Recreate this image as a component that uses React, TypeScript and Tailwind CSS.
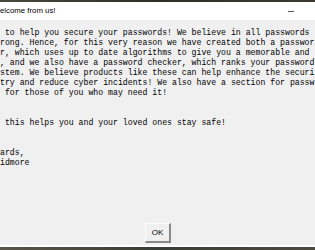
import React from "react";

const lines = [
  " to help you secure your passwords! We believe in all passwords",
  "rong. Hence, for this very reason we have created both a passwor",
  "r, which uses up to date algorithms to give you a memorable and",
  ", and we also have a password checker, which ranks your password",
  "stem. We believe products like these can help enhance the securi",
  "try and reduce cyber incidents! We also have a section for passw",
  " for those of you who may need it!",
  "",
  "",
  " this helps you and your loved ones stay safe!",
  "",
  "",
  "ards,",
  "idmore",
];

export default function App() {
  return (
    <div className="w-[315px] h-[250px] overflow-hidden flex flex-col bg-[#33352c]">
      <div className="h-[2px] shrink-0 bg-gradient-to-r from-[#4a4a3c] via-[#2c3026] to-[#3e3a30]" />
      <div className="h-[18px] shrink-0 bg-white flex items-center justify-between">
        <span
          className="text-[7.8px] leading-none text-black"
          style={{ fontFamily: '"Liberation Sans", Arial, sans-serif' }}
        >
          elcome from us!
        </span>
        <div className="w-[6px] h-[1px] bg-[#555] mr-[21px]" />
      </div>
      <div className="flex-1 bg-[#f0f0f0] flex flex-col pt-[8px] pb-[2px]">
        <div
          className="text-[8.2px] leading-[10px] text-black whitespace-pre overflow-hidden"
          style={{ fontFamily: '"Liberation Mono", "Courier New", monospace' }}
        >
          {lines.map((l, i) => (
            <div key={i} className="h-[10px]">
              {l}
            </div>
          ))}
        </div>
        <div className="mt-auto flex justify-center pl-[1px]">
          <div
            className="w-[26px] h-[20px] flex items-center justify-center bg-[#f0f0f0] border-t border-l border-t-[#fdfdfd] border-l-[#fdfdfd] border-r-2 border-b-2 border-r-[#8a8a8a] border-b-[#8a8a8a] text-[8px] text-black"
            style={{ fontFamily: '"Liberation Sans", Arial, sans-serif' }}
          >
            OK
          </div>
        </div>
      </div>
      <div className="h-[2px] shrink-0 bg-white" />
      <div className="h-[3px] shrink-0 bg-gradient-to-r from-[#5a5548] via-[#3a3d33] to-[#4d4a40]" />
    </div>
  );
}
